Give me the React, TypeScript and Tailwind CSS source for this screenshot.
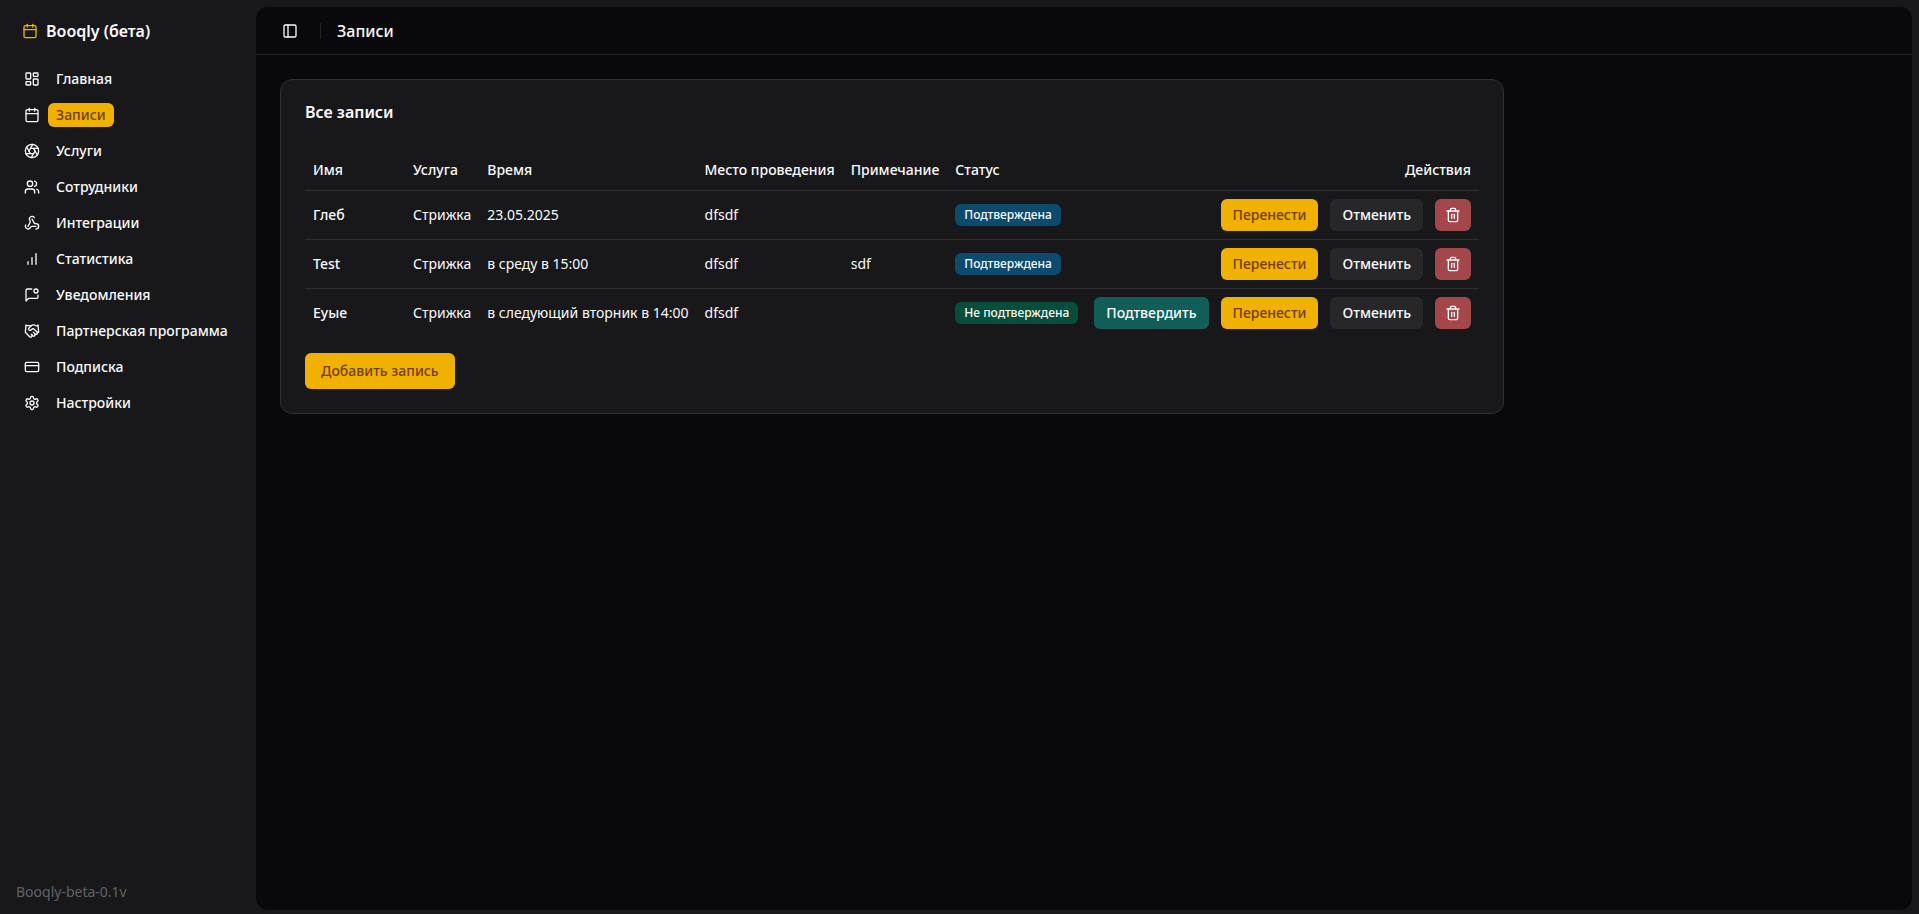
import React from 'react';
import {
  Aperture,
  Calendar,
  CreditCard,
  Handshake,
  LayoutDashboard,
  PanelLeft,
  Trash2,
  Users,
  Webhook,
} from 'lucide-react';

type IconProps = { className?: string };

function OutlineIcon({ className, children }: IconProps & { children: React.ReactNode }) {
  return (
    <svg
      className={className}
      viewBox="0 0 24 24"
      fill="none"
      stroke="currentColor"
      strokeWidth="2"
      strokeLinecap="round"
      strokeLinejoin="round"
      aria-hidden="true"
    >
      {children}
    </svg>
  );
}

function BarsIcon({ className }: IconProps) {
  return (
    <OutlineIcon className={className}>
      <path d="M12 20V10" />
      <path d="M18 20V4" />
      <path d="M6 20v-4" />
    </OutlineIcon>
  );
}

function MessageDotIcon({ className }: IconProps) {
  return (
    <OutlineIcon className={className}>
      <path d="M11.7 3H5a2 2 0 0 0-2 2v16l4-4h12a2 2 0 0 0 2-2v-2.7" />
      <circle cx="18" cy="6" r="3" />
    </OutlineIcon>
  );
}

function GearIcon({ className }: IconProps) {
  return (
    <OutlineIcon className={className}>
      <path d="M12.22 2h-.44a2 2 0 0 0-2 2v.18a2 2 0 0 1-1 1.73l-.43.25a2 2 0 0 1-2 0l-.15-.08a2 2 0 0 0-2.73.73l-.22.38a2 2 0 0 0 .73 2.73l.15.1a2 2 0 0 1 1 1.72v.51a2 2 0 0 1-1 1.74l-.15.09a2 2 0 0 0-.73 2.73l.22.38a2 2 0 0 0 2.73.73l.15-.08a2 2 0 0 1 2 0l.43.25a2 2 0 0 1 1 1.73V20a2 2 0 0 0 2 2h.44a2 2 0 0 0 2-2v-.18a2 2 0 0 1 1-1.73l.43-.25a2 2 0 0 1 2 0l.15.08a2 2 0 0 0 2.73-.73l.22-.39a2 2 0 0 0-.73-2.73l-.15-.08a2 2 0 0 1-1-1.74v-.5a2 2 0 0 1 1-1.74l.15-.09a2 2 0 0 0 .73-2.73l-.22-.38a2 2 0 0 0-2.73-.73l-.15.08a2 2 0 0 1-2 0l-.43-.25a2 2 0 0 1-1-1.73V4a2 2 0 0 0-2-2z" />
      <circle cx="12" cy="12" r="3" />
    </OutlineIcon>
  );
}

const nav = [
  { label: 'Главная', Icon: LayoutDashboard },
  { label: 'Записи', Icon: Calendar, active: true },
  { label: 'Услуги', Icon: Aperture },
  { label: 'Сотрудники', Icon: Users },
  { label: 'Интеграции', Icon: Webhook },
  { label: 'Статистика', Icon: BarsIcon },
  { label: 'Уведомления', Icon: MessageDotIcon },
  { label: 'Партнерская программа', Icon: Handshake },
  { label: 'Подписка', Icon: CreditCard },
  { label: 'Настройки', Icon: GearIcon },
];

const bookings = [
  { name: 'Глеб', service: 'Стрижка', time: '23.05.2025', place: 'dfsdf', note: '', confirmed: true },
  { name: 'Test', service: 'Стрижка', time: 'в среду в 15:00', place: 'dfsdf', note: 'sdf', confirmed: true },
  { name: 'Еуые', service: 'Стрижка', time: 'в следующий вторник в 14:00', place: 'dfsdf', note: '', confirmed: false },
];

function Sidebar() {
  return (
    <aside className="flex w-64 shrink-0 flex-col">
      <a href="#" className="mt-[15px] flex h-8 items-center gap-2 px-[22px] text-base font-semibold">
        <Calendar className="size-4 text-[#f0b100]" />
        Booqly (бета)
      </a>
      <nav className="mt-4 px-4">
        <ul className="flex flex-col gap-1">
          {nav.map(({ label, Icon, active }) => (
            <li key={label} className="flex h-8 items-center gap-2 px-2">
              <Icon className="size-4 shrink-0" />
              <a
                href="#"
                className={
                  active
                    ? 'flex h-6 items-center rounded-md bg-[#f0b100] px-2 text-sm font-medium text-[#733e0a]'
                    : 'flex h-6 items-center whitespace-nowrap px-2 text-sm font-medium'
                }
              >
                {label}
              </a>
            </li>
          ))}
        </ul>
      </nav>
      <p className="mt-auto px-4 pb-3 text-sm text-[#626266]">Booqly-beta-0.1v</p>
    </aside>
  );
}

function BookingsTable() {
  return (
    <table className="w-full whitespace-nowrap text-left text-sm">
      <thead>
        <tr className="h-10 border-b border-[#303032]">
          <th className="w-[100px] px-2 font-medium">Имя</th>
          <th className="px-2 font-medium">Услуга</th>
          <th className="px-2 font-medium">Время</th>
          <th className="px-2 font-medium">Место проведения</th>
          <th className="px-2 font-medium">Примечание</th>
          <th className="px-2 font-medium">Статус</th>
          <th className="px-2 text-right font-medium">Действия</th>
        </tr>
      </thead>
      <tbody>
        {bookings.map((b) => (
          <tr key={b.name} className="border-b border-[#303032] last:border-0">
            <td className="p-2 font-medium">{b.name}</td>
            <td className="p-2">{b.service}</td>
            <td className="p-2">{b.time}</td>
            <td className="p-2">{b.place}</td>
            <td className="p-2">{b.note}</td>
            <td className="p-2">
              <span
                className={
                  b.confirmed
                    ? 'inline-flex h-[22px] items-center rounded-md bg-[#0c4a6e] px-[9px] text-xs font-medium'
                    : 'inline-flex h-[22px] items-center rounded-md bg-[#064e3b] px-[9px] text-xs font-medium'
                }
              >
                {b.confirmed ? 'Подтверждена' : 'Не подтверждена'}
              </span>
            </td>
            <td className="p-2">
              <div className="flex justify-end gap-3">
                {!b.confirmed && (
                  <button className="h-8 rounded-md bg-[#115e59] px-3 font-medium">Подтвердить</button>
                )}
                <button className="h-8 rounded-md bg-[#f0b100] px-3 font-medium text-[#733e0a]">Перенести</button>
                <button className="h-8 rounded-md bg-[#27272a] px-3 font-medium">Отменить</button>
                <button
                  aria-label="Удалить"
                  className="flex h-8 w-9 items-center justify-center rounded-md bg-[#a4474a]"
                >
                  <Trash2 className="size-4" />
                </button>
              </div>
            </td>
          </tr>
        ))}
      </tbody>
    </table>
  );
}

export default function App() {
  return (
    <div className="flex min-h-screen bg-[#18181b] font-['Noto_Sans',sans-serif] text-[#fafafa]">
      <Sidebar />
      <main className="mt-[7px] mr-[7px] mb-1 min-w-0 flex-1 rounded-xl bg-[#09090b]">
        <header className="flex h-12 items-center border-b border-[#232325] px-5">
          <button aria-label="Боковая панель" className="flex size-7 items-center justify-center rounded-md">
            <PanelLeft className="size-4" />
          </button>
          <div className="mx-4 h-4 w-px bg-[#232325]" />
          <h1 className="text-base font-medium">Записи</h1>
        </header>
        <div className="p-6">
          <section className="w-fit rounded-xl border border-[#303032] bg-[#18181b] p-6">
            <h2 className="mb-[30px] text-base leading-4 font-semibold">Все записи</h2>
            <BookingsTable />
            <button className="mt-4 h-9 rounded-md bg-[#f0b100] px-4 text-sm font-medium text-[#733e0a]">
              Добавить запись
            </button>
          </section>
        </div>
      </main>
    </div>
  );
}
